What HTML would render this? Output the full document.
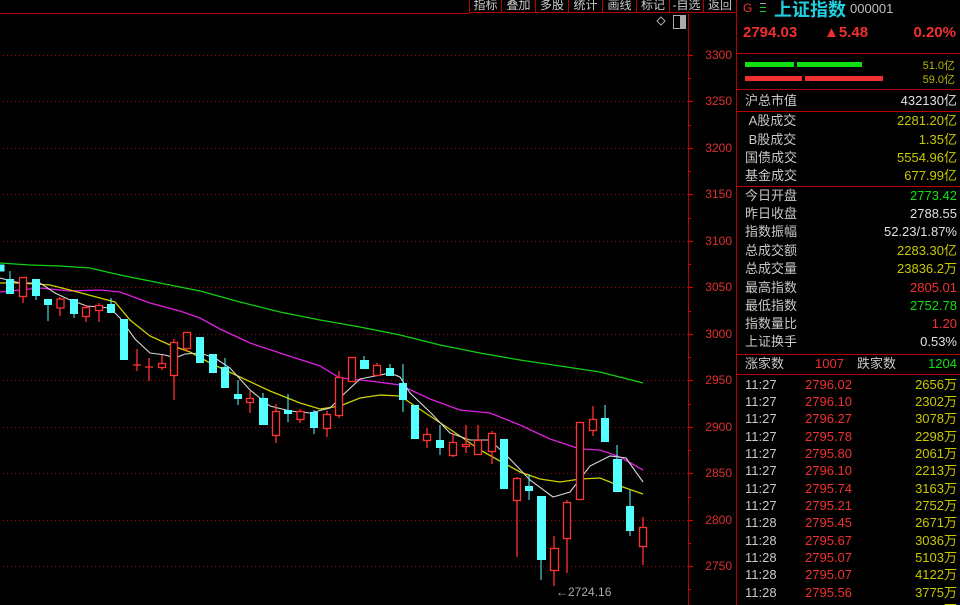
<!DOCTYPE html>
<html><head><meta charset="utf-8"><style>
*{margin:0;padding:0;box-sizing:border-box}
body{width:960px;height:605px;background:#000;overflow:hidden;position:relative;font-family:"Liberation Sans","Noto Sans CJK SC",sans-serif;}
.tb{position:absolute;top:0;height:13px;border-right:1px solid #b00;border-bottom:1px solid #b00;color:#c8c8c8;font-size:12px;line-height:10px;text-align:center;overflow:hidden}
.ax{position:absolute;left:692px;width:40px;text-align:right;color:#e03030;font-size:12px}
.rp{position:absolute;left:736px;top:0;width:224px;height:605px;border-left:1px solid #b00;overflow:hidden}
.hl{position:absolute;left:0;width:224px;height:1px;background:#b00}
.row{position:absolute;left:8px;width:212px;height:18px;font-size:13px;line-height:18px;color:#c8c8c8}
.row span{position:absolute;right:0}
.y{color:#c8c800}.g{color:#10e010}.r{color:#f03030}.w{color:#e0e0e0}
.t{position:absolute;left:8px;width:212px;font-size:13px;line-height:17px;height:17px;color:#c8c8c8}
.t b{font-weight:normal;position:absolute;left:60px;color:#f03030}
.t i{font-style:normal;position:absolute;right:0;color:#c8c800}
</style></head><body>
<div class="tb" style="left:469px;width:33px;border-left:1px solid #b00">指标</div>
<div class="tb" style="left:502px;width:34px">叠加</div>
<div class="tb" style="left:536px;width:33px">多股</div>
<div class="tb" style="left:569px;width:34px">统计</div>
<div class="tb" style="left:603px;width:34px">画线</div>
<div class="tb" style="left:637px;width:33px">标记</div>
<div class="tb" style="left:670px;width:34px">-自选</div>
<div class="tb" style="left:704px;width:33px">返回</div>
<div style="position:absolute;left:0;top:13px;width:469px;height:1px;background:#b00"></div>
<svg style="position:absolute;left:0;top:0" width="737" height="605">
<g stroke="#b00" stroke-width="1">
<line x1="688.5" y1="14" x2="688.5" y2="605"/>
</g>
<g stroke="#a00000" stroke-dasharray="1,3">
<line x1="3" y1="55.5" x2="688" y2="55.5"/><line x1="3" y1="101.5" x2="688" y2="101.5"/><line x1="3" y1="148.5" x2="688" y2="148.5"/><line x1="3" y1="194.5" x2="688" y2="194.5"/><line x1="3" y1="241.5" x2="688" y2="241.5"/><line x1="3" y1="287.5" x2="688" y2="287.5"/><line x1="3" y1="334.5" x2="688" y2="334.5"/><line x1="3" y1="380.5" x2="688" y2="380.5"/><line x1="3" y1="427.5" x2="688" y2="427.5"/><line x1="3" y1="473.5" x2="688" y2="473.5"/><line x1="3" y1="520.5" x2="688" y2="520.5"/><line x1="3" y1="566.5" x2="688" y2="566.5"/>
</g>
<g stroke="#d00" stroke-width="1">
<line x1="688" y1="55.5" x2="693" y2="55.5"/><line x1="688" y1="101.5" x2="693" y2="101.5"/><line x1="688" y1="148.5" x2="693" y2="148.5"/><line x1="688" y1="194.5" x2="693" y2="194.5"/><line x1="688" y1="241.5" x2="693" y2="241.5"/><line x1="688" y1="287.5" x2="693" y2="287.5"/><line x1="688" y1="334.5" x2="693" y2="334.5"/><line x1="688" y1="380.5" x2="693" y2="380.5"/><line x1="688" y1="427.5" x2="693" y2="427.5"/><line x1="688" y1="473.5" x2="693" y2="473.5"/><line x1="688" y1="520.5" x2="693" y2="520.5"/><line x1="688" y1="566.5" x2="693" y2="566.5"/>
<line x1="688" y1="78.5" x2="691" y2="78.5"/><line x1="688" y1="125.5" x2="691" y2="125.5"/><line x1="688" y1="171.5" x2="691" y2="171.5"/><line x1="688" y1="218.5" x2="691" y2="218.5"/><line x1="688" y1="264.5" x2="691" y2="264.5"/><line x1="688" y1="311.5" x2="691" y2="311.5"/><line x1="688" y1="357.5" x2="691" y2="357.5"/><line x1="688" y1="404.5" x2="691" y2="404.5"/><line x1="688" y1="450.5" x2="691" y2="450.5"/><line x1="688" y1="497.5" x2="691" y2="497.5"/><line x1="688" y1="543.5" x2="691" y2="543.5"/><line x1="688" y1="589.5" x2="691" y2="589.5"/>
</g>
<path d="M661 17 L665 21 L661 25 L657 21 Z" fill="none" stroke="#aaa"/>
<rect x="673.5" y="15.5" width="12" height="13" fill="none" stroke="#aaa"/><rect x="680" y="16" width="5" height="12" fill="#aaa"/>
<polyline fill="none" stroke="#10d010" stroke-width="1.3" points="0,263 30,265 60,266 90,268 120,275 160,283 200,291 240,302 280,312 320,320 360,327 400,335 440,345 480,353 520,360 560,366 600,372 643,383"/>
<polyline fill="none" stroke="#e020e0" stroke-width="1.3" points="0,292 20,290 40,288 70,291 100,290 120,292 150,303 180,311 200,318 220,329 250,343 280,353 320,366 340,378 370,381 400,385 430,399 460,410 490,413 520,425 550,439 580,449 600,450 620,457 643,470"/>
<polyline fill="none" stroke="#d0d000" stroke-width="1.3" points="0,283 20,283 50,285 70,290 100,298 115,302 130,320 150,336 170,345 190,352 210,363 240,377 270,391 300,403 320,409 340,406 360,398 380,395 400,396 430,416 460,436 480,450 500,461 520,472 540,479 560,482 580,479 600,478 620,486 643,494"/>
<polyline fill="none" stroke="#d8d8d8" stroke-width="1.1" points="0,278 20,283 40,283 55,293 70,300 87,306 100,307 110,308 120,318 135,339 150,353 165,355 175,358 185,354 200,353 215,358 230,368 250,390 270,406 290,411 310,413 330,408 345,393 360,379 375,376 390,373 400,377 410,393 430,412 450,433 470,440 490,440 510,459 530,480 553,497 570,492 590,466 610,456 626,458 643,482"/>
<g fill="#54ffff" stroke="#54ffff">
<line x1="10" y1="271" x2="10" y2="294"/><rect x="6.5" y="279.5" width="7" height="14"/>
<line x1="36" y1="279" x2="36" y2="300"/><rect x="32.5" y="279.5" width="7" height="16"/>
<line x1="48" y1="299" x2="48" y2="321"/><rect x="44.5" y="299.5" width="7" height="5"/>
<line x1="74" y1="299" x2="74" y2="318"/><rect x="70.5" y="299.5" width="7" height="14"/>
<line x1="111" y1="298" x2="111" y2="313"/><rect x="107.5" y="304.5" width="7" height="8"/>
<rect x="120.5" y="319.5" width="7" height="40"/>
<rect x="196.5" y="337.5" width="7" height="25"/>
<rect x="209.5" y="354.5" width="7" height="18"/>
<line x1="225" y1="358" x2="225" y2="388"/><rect x="221.5" y="367.5" width="7" height="20"/>
<line x1="238" y1="380" x2="238" y2="405"/><rect x="234.5" y="394.5" width="7" height="4"/>
<line x1="263" y1="393" x2="263" y2="425"/><rect x="259.5" y="398.5" width="8" height="26"/>
<line x1="288" y1="394" x2="288" y2="422"/><rect x="284.5" y="410.5" width="7" height="3"/>
<line x1="314" y1="410" x2="314" y2="434"/><rect x="310.5" y="412.5" width="7" height="15"/>
<line x1="364" y1="356" x2="364" y2="369"/><rect x="360.5" y="360.5" width="8" height="8"/>
<line x1="390" y1="364" x2="390" y2="376"/><rect x="386.5" y="368.5" width="7" height="7"/>
<line x1="403" y1="364" x2="403" y2="412"/><rect x="399.5" y="383.5" width="7" height="16"/>
<rect x="411.5" y="405.5" width="7" height="33"/>
<line x1="440" y1="425" x2="440" y2="455"/><rect x="436.5" y="440.5" width="7" height="7"/>
<rect x="500.5" y="439.5" width="7" height="49"/>
<line x1="529" y1="474" x2="529" y2="500"/><rect x="525.5" y="486.5" width="7" height="4"/>
<line x1="541" y1="496" x2="541" y2="580"/><rect x="537.5" y="496.5" width="8" height="63"/>
<line x1="605" y1="405" x2="605" y2="442"/><rect x="601.5" y="418.5" width="7" height="23"/>
<line x1="617" y1="445" x2="617" y2="492"/><rect x="613.5" y="459.5" width="8" height="32"/>
<line x1="630" y1="489" x2="630" y2="536"/><rect x="626.5" y="506.5" width="7" height="24"/>
<rect x="0" y="265" width="4" height="6"/>
</g>
<g fill="#000" stroke="#ff3232" stroke-width="1.3">
<line x1="23" y1="277" x2="23" y2="303"/><rect x="19.5" y="277.5" width="7" height="19"/>
<line x1="60" y1="297" x2="60" y2="316"/><rect x="57" y="299" width="7" height="9"/>
<line x1="86" y1="305" x2="86" y2="322"/><rect x="82.5" y="307.5" width="7" height="9"/>
<line x1="99" y1="303" x2="99" y2="322"/><rect x="95.5" y="305.5" width="7" height="5"/>
<line x1="137" y1="349" x2="137" y2="371"/><line x1="133" y1="365" x2="141" y2="365"/>
<line x1="149" y1="358" x2="149" y2="381"/><line x1="145" y1="367" x2="153" y2="367"/>
<line x1="162" y1="355" x2="162" y2="370"/><rect x="158.5" y="363.5" width="7" height="4"/>
<line x1="174" y1="339" x2="174" y2="400"/><rect x="170.5" y="342.5" width="7" height="33"/>
<line x1="187" y1="332" x2="187" y2="352"/><rect x="183.5" y="332.5" width="7" height="16"/>
<line x1="250" y1="391" x2="250" y2="413"/><rect x="246.5" y="398.5" width="7" height="4"/>
<line x1="276" y1="404" x2="276" y2="443"/><rect x="272.5" y="411.5" width="7" height="24"/>
<line x1="300" y1="409" x2="300" y2="423"/><rect x="297" y="411.5" width="7" height="8"/>
<line x1="327" y1="411" x2="327" y2="437"/><rect x="323.5" y="414.5" width="7" height="14"/>
<line x1="339" y1="371" x2="339" y2="418"/><rect x="335.5" y="377.5" width="7" height="38"/>
<line x1="352" y1="357" x2="352" y2="381"/><rect x="348.5" y="357.5" width="7" height="24"/>
<line x1="377" y1="363" x2="377" y2="376"/><rect x="373.5" y="365.5" width="7" height="10"/>
<line x1="427" y1="428" x2="427" y2="448"/><rect x="423.5" y="434.5" width="7" height="6"/>
<line x1="453" y1="433" x2="453" y2="457"/><rect x="449.5" y="442.5" width="7" height="13"/>
<line x1="466" y1="425" x2="466" y2="453"/><rect x="462.5" y="444.5" width="7" height="2"/>
<line x1="478" y1="425" x2="478" y2="455"/><rect x="474.5" y="440.5" width="7" height="14"/>
<line x1="492" y1="431" x2="492" y2="464"/><rect x="488.5" y="433.5" width="7" height="18"/>
<line x1="517" y1="477" x2="517" y2="557"/><rect x="513.5" y="478.5" width="7" height="22"/>
<line x1="554" y1="536" x2="554" y2="586"/><rect x="550.5" y="548.5" width="8" height="22"/>
<line x1="567" y1="500" x2="567" y2="573"/><rect x="563.5" y="502.5" width="7" height="36"/>
<line x1="580" y1="422" x2="580" y2="500"/><rect x="576.5" y="422.5" width="7" height="77"/>
<line x1="593" y1="406" x2="593" y2="436"/><rect x="589.5" y="419.5" width="7" height="11"/>
<line x1="643" y1="517" x2="643" y2="565"/><rect x="639.5" y="527.5" width="7" height="19"/>
</g>
<text x="556" y="596" fill="#aaa" font-size="12" font-family="Liberation Sans">←2724.16</text>
</svg>
<div class="ax" style="top:48px">3300</div><div class="ax" style="top:94px">3250</div><div class="ax" style="top:141px">3200</div><div class="ax" style="top:187px">3150</div><div class="ax" style="top:234px">3100</div><div class="ax" style="top:280px">3050</div><div class="ax" style="top:327px">3000</div><div class="ax" style="top:373px">2950</div><div class="ax" style="top:420px">2900</div><div class="ax" style="top:466px">2850</div><div class="ax" style="top:513px">2800</div><div class="ax" style="top:559px">2750</div>
<div class="rp">
<div style="position:absolute;left:6px;top:1px;font-size:12px;color:#f03030">G</div>
<div style="position:absolute;left:23px;top:3px;width:6px;height:9px;border-top:1px solid #aaa;border-bottom:1px solid #1c1;"><div style="margin-top:3px;height:1px;background:#1c1"></div></div>
<div style="position:absolute;left:37px;top:-4px;font-size:18px;font-weight:bold;color:#20d0e0">上证指数</div>
<div style="position:absolute;left:113px;top:1px;font-size:13px;color:#c0c0c0">000001</div>
<div style="position:absolute;left:6px;top:24px;font-size:15px;font-weight:bold;color:#f03030">2794.03</div>
<div style="position:absolute;left:87px;top:24px;font-size:15px;font-weight:bold;color:#f03030">▲5.48</div>
<div style="position:absolute;right:4px;top:24px;font-size:15px;font-weight:bold;color:#f03030">0.20%</div>
<div class="hl" style="top:53px"></div>
<div style="position:absolute;left:8px;top:62px;width:49px;height:5px;background:#10e010"></div>
<div style="position:absolute;left:60px;top:62px;width:65px;height:5px;background:#10e010"></div>
<div style="position:absolute;left:8px;top:76px;width:57px;height:5px;background:#f03030"></div>
<div style="position:absolute;left:68px;top:76px;width:78px;height:5px;background:#f03030"></div>
<div style="position:absolute;right:5px;top:57px;font-size:11px;color:#b8b800">51.0亿</div>
<div style="position:absolute;right:5px;top:71px;font-size:11px;color:#b8b800">59.0亿</div>
<div class="hl" style="top:89px"></div>
<div class="row" style="top:92px">沪总市值<span class="w">432130亿</span></div>
<div class="hl" style="top:111px"></div>
<div class="row" style="top:112px">&nbsp;A股成交<span class="y">2281.20亿</span></div>
<div class="row" style="top:131px">&nbsp;B股成交<span class="y">1.35亿</span></div>
<div class="row" style="top:149px">国债成交<span class="y">5554.96亿</span></div>
<div class="row" style="top:167px">基金成交<span class="y">677.99亿</span></div>
<div class="hl" style="top:186px"></div>
<div class="row" style="top:187px">今日开盘<span class="g">2773.42</span></div>
<div class="row" style="top:205px">昨日收盘<span class="w">2788.55</span></div>
<div class="row" style="top:223px">指数振幅<span class="w">52.23/1.87%</span></div>
<div class="row" style="top:242px">总成交额<span class="y">2283.30亿</span></div>
<div class="row" style="top:260px">总成交量<span class="y">23836.2万</span></div>
<div class="row" style="top:279px">最高指数<span class="r">2805.01</span></div>
<div class="row" style="top:297px">最低指数<span class="g">2752.78</span></div>
<div class="row" style="top:315px">指数量比<span class="r">1.20</span></div>
<div class="row" style="top:333px">上证换手<span class="w">0.53%</span></div>
<div class="hl" style="top:354px"></div>
<div class="row" style="top:355px">涨家数<b style="font-weight:normal;position:absolute;left:70px;color:#f03030">1007</b><b style="font-weight:normal;position:absolute;left:112px">跌家数</b><span class="g">1204</span></div>
<div class="hl" style="top:374px"></div>
<div class="t" style="top:376px">11:27<b>2796.02</b><i>2656万</i></div>
<div class="t" style="top:393px">11:27<b>2796.10</b><i>2302万</i></div>
<div class="t" style="top:410px">11:27<b>2796.27</b><i>3078万</i></div>
<div class="t" style="top:428px">11:27<b>2795.78</b><i>2298万</i></div>
<div class="t" style="top:445px">11:27<b>2795.80</b><i>2061万</i></div>
<div class="t" style="top:462px">11:27<b>2796.10</b><i>2213万</i></div>
<div class="t" style="top:480px">11:27<b>2795.74</b><i>3163万</i></div>
<div class="t" style="top:497px">11:27<b>2795.21</b><i>2752万</i></div>
<div class="t" style="top:514px">11:28<b>2795.45</b><i>2671万</i></div>
<div class="t" style="top:532px">11:28<b>2795.67</b><i>3036万</i></div>
<div class="t" style="top:549px">11:28<b>2795.07</b><i>5103万</i></div>
<div class="t" style="top:566px">11:28<b>2795.07</b><i>4122万</i></div>
<div class="t" style="top:584px">11:28<b>2795.56</b><i>3775万</i></div>
<div class="t" style="top:601px">11:28<b>2794.93</b><i>2841万</i></div>
</div>
</body></html>
